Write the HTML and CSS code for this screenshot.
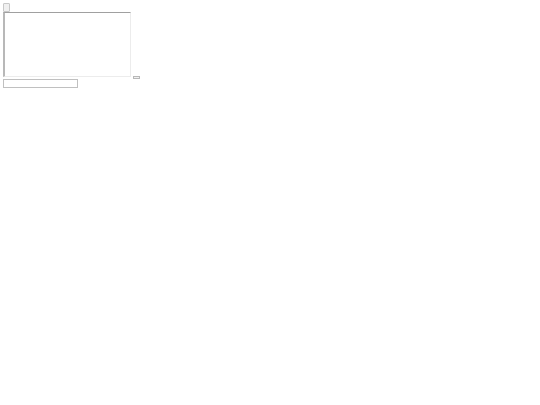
FILE: index.html
```html
<!DOCTYPE html>
<html>
<head>
<meta charset="utf-8">
<link rel="stylesheet" href="styles.css">
</head>
<body>
<div class="page">
  <button class="tiny-btn" type="button"></button>
  <div class="editor-row">
    <div class="editor"></div>
    <button class="mini-btn" type="button"></button>
  </div>
  <input class="field" type="text">
</div>
</body>
</html>
```

FILE: styles.css
```css
html, body {
  margin: 0;
  padding: 0;
  background: #ffffff;
  font-family: "Liberation Sans", Arial, sans-serif;
}
.page {
  padding: 3px;
  display: flex;
  flex-direction: column;
  align-items: flex-start;
}
.tiny-btn {
  width: 7px;
  height: 9px;
  padding: 0;
  margin: 0;
  border: 1px solid #c8c8c8;
  border-radius: 1px;
  background: #f0f0f0;
}
.editor-row {
  display: flex;
  align-items: flex-end;
  gap: 2px;
}
.editor {
  width: 125px;
  height: 63px;
  border-top: 1px solid #a0a0a0;
  border-left: 2px solid #b8b8b8;
  border-right: 1px solid #ececec;
  border-bottom: 1px solid #ececec;
  background: #fff;
}
.mini-btn {
  width: 7px;
  height: 3px;
  padding: 0;
  margin: 0 0 -2px 0;
  border: 1px solid #b8b8b8;
  background: #f0f0f0;
}
.field {
  margin-top: 2px;
  width: 73px;
  height: 7px;
  padding: 0;
  border: 1px solid #c0c0c0;
  background: #fff;
}
```
